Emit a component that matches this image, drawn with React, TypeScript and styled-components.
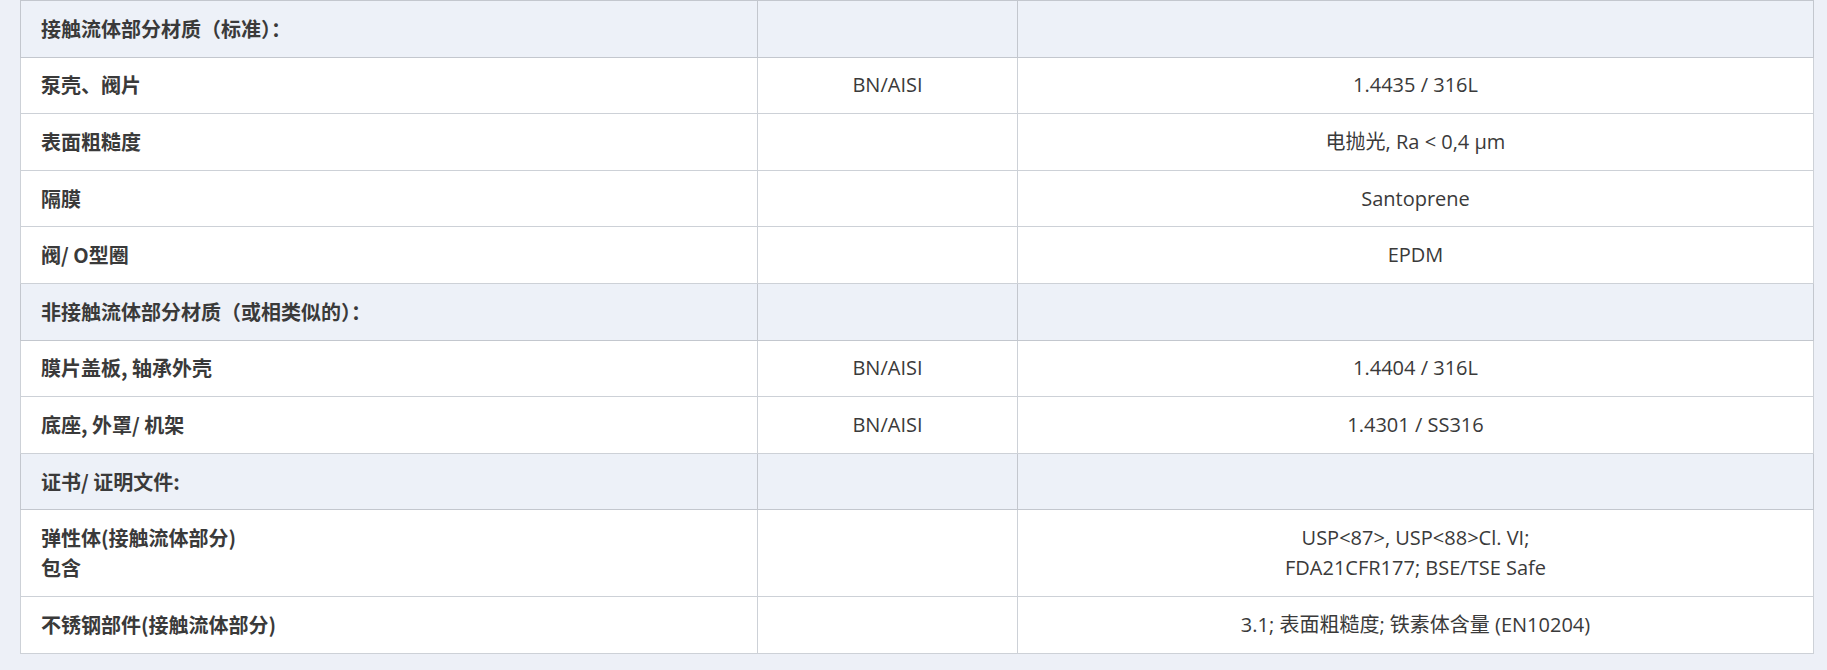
import styled, { createGlobalStyle } from 'styled-components'

type Row = {
  label: string[]
  grade?: string
  value?: string[]
  section?: boolean
}

const rows: Row[] = [
  { label: ['接触流体部分材质（标准）：'], section: true },
  { label: ['泵壳、阀片'], grade: 'BN/AISI', value: ['1.4435 / 316L'] },
  { label: ['表面粗糙度'], value: ['电抛光, Ra < 0,4 µm'] },
  { label: ['隔膜'], value: ['Santoprene'] },
  { label: ['阀/ O型圈'], value: ['EPDM'] },
  { label: ['非接触流体部分材质（或相类似的）：'], section: true },
  { label: ['膜片盖板, 轴承外壳'], grade: 'BN/AISI', value: ['1.4404 / 316L'] },
  { label: ['底座, 外罩/ 机架'], grade: 'BN/AISI', value: ['1.4301 / SS316'] },
  { label: ['证书/ 证明文件:'], section: true },
  {
    label: ['弹性体(接触流体部分)', '包含'],
    value: ['USP<87>, USP<88>Cl. VI;', 'FDA21CFR177; BSE/TSE Safe'],
  },
  { label: ['不锈钢部件(接触流体部分)'], value: ['3.1; 表面粗糙度; 铁素体含量 (EN10204)'] },
]

export default function App() {
  return (
    <>
      <GlobalStyle />
      <Page>
        <SpecTable>
          <colgroup>
            <col style={{ width: 737 }} />
            <col style={{ width: 260 }} />
            <col />
          </colgroup>
          <tbody>
            {rows.map((row, i) => (
              <SpecRow key={i} $section={row.section}>
                <LabelCell>
                  {row.label.map((line, j) => (
                    <Line key={j}>{line}</Line>
                  ))}
                </LabelCell>
                <ValueCell>{row.grade}</ValueCell>
                <ValueCell>
                  {row.value?.map((line, j) => (
                    <Line key={j}>{line}</Line>
                  ))}
                </ValueCell>
              </SpecRow>
            ))}
          </tbody>
        </SpecTable>
      </Page>
    </>
  )
}

const GlobalStyle = createGlobalStyle`
  html, body {
    margin: 0;
    background: #edf0f7;
  }
`

const Page = styled.div`
  padding: 0 13px 16px 20px;
  font-family: 'Open Sans', 'Noto Sans CJK SC', sans-serif;
  color: #3a3a3a;
`

const SpecTable = styled.table`
  width: 1794px;
  border-collapse: collapse;
  table-layout: fixed;
  background: #ffffff;
  border: 1px solid #c6cad1;
`

const SpecRow = styled.tr<{ $section?: boolean }>`
  background: ${(p) => (p.$section ? '#edf1f8' : '#ffffff')};

  td {
    border: 1px solid ${(p) => (p.$section ? '#c3c7ce' : '#cdd1d7')};
  }
`

const LabelCell = styled.td`
  padding: 12.8px 20px;
  font-family: 'Noto Sans CJK SC', 'Open Sans', sans-serif;
  font-size: 20px;
  font-weight: 700;
  line-height: 30px;
  color: #3a3a3a;
  text-align: left;
  vertical-align: middle;
`

const ValueCell = styled.td`
  padding: 12.8px 20px;
  font-size: 20px;
  line-height: 30px;
  text-align: center;
  vertical-align: middle;
`

const Line = styled.div`
  white-space: nowrap;
`
